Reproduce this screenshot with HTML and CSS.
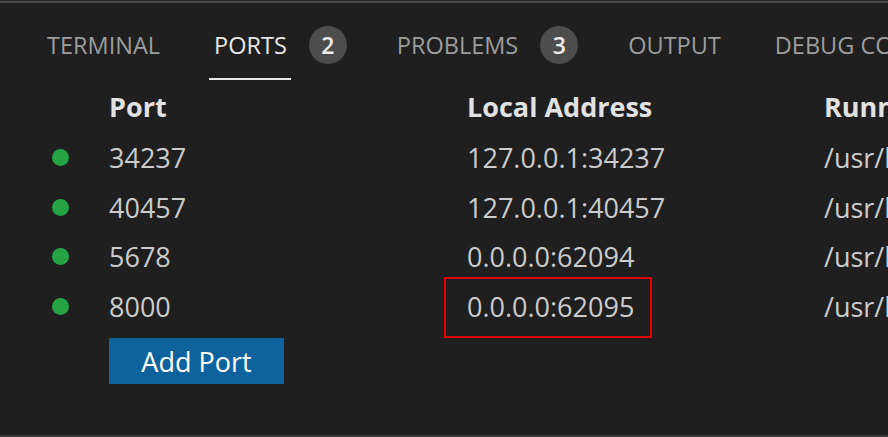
FILE: index.html
```html
<html>
  <head>
    <title>Ports</title>
    <link rel="stylesheet" href="styles.css">
  </head>
  <body>
    <section class="panel">
      <nav class="panel-tabs">
        <div class="tab"><span class="tab-label">TERMINAL</span></div>
        <div class="tab active"><span class="tab-label">PORTS</span><span class="badge">2</span></div>
        <div class="tab"><span class="tab-label">PROBLEMS</span><span class="badge">3</span></div>
        <div class="tab"><span class="tab-label">OUTPUT</span></div>
        <div class="tab"><span class="tab-label">DEBUG CONSOLE</span></div>
      </nav>

      <div class="ports-table">
        <div class="row header">
          <span class="cell-icon"></span>
          <span class="cell">Port</span>
          <span class="cell">Local Address</span>
          <span class="cell">Running Process</span>
        </div>
        <div class="row">
          <span class="cell-icon"><i class="dot"></i></span>
          <span class="cell">34237</span>
          <span class="cell">127.0.0.1:34237</span>
          <span class="cell">/usr/bin/python3</span>
        </div>
        <div class="row">
          <span class="cell-icon"><i class="dot"></i></span>
          <span class="cell">40457</span>
          <span class="cell">127.0.0.1:40457</span>
          <span class="cell">/usr/bin/python3</span>
        </div>
        <div class="row">
          <span class="cell-icon"><i class="dot"></i></span>
          <span class="cell">5678</span>
          <span class="cell">0.0.0.0:62094</span>
          <span class="cell">/usr/bin/python3</span>
        </div>
        <div class="row">
          <span class="cell-icon"><i class="dot"></i></span>
          <span class="cell">8000</span>
          <span class="cell marked">0.0.0.0:62095<b class="highlight"></b></span>
          <span class="cell">/usr/bin/python3</span>
        </div>
        <div class="row actions">
          <span class="cell-icon"></span>
          <span class="cell"><button class="add-port">Add Port</button></span>
        </div>
      </div>
    </section>
  </body>
</html>
```

FILE: styles.css
```css
html {
  background-color: #1f1f1f;
}

body {
  margin: 0;
  padding-top: 1px;
  background-color: #262626;
  height: 100vh;
  box-sizing: border-box;
  overflow: hidden;
  font-family: "Open Sans", "Noto Sans", sans-serif;
}

.panel {
  background-color: #1f1f1f;
  border-top: 2px solid #474747;
  border-bottom: 2px solid #3a3a3a;
  height: 100%;
  box-sizing: border-box;
  display: flex;
  flex-direction: column;
}

.panel-tabs {
  display: flex;
  flex-direction: row;
  height: 77px;
  padding-left: 42px;
  white-space: nowrap;

  .tab {
    display: flex;
    align-items: center;
    gap: 18px;
    margin-right: 45px;
    color: #9d9d9d;
    font-size: 23.5px;
  }

  .tab-label {
    padding: 9px 4px 0 5px;
    height: 100%;
    display: flex;
    align-items: center;
    box-sizing: border-box;
    border-bottom: 2px solid transparent;
  }

  .active {
    color: #e7e7e7;

    .tab-label {
      border-bottom-color: #e7e7e7;
    }
  }

  .badge {
    width: 38px;
    height: 38px;
    border-radius: 50%;
    background-color: #4d4d4d;
    color: #ececec;
    font-size: 23px;
    font-weight: 600;
    display: flex;
    align-items: center;
    justify-content: center;
    margin-top: 6px;
  }
}

.ports-table {
  display: flex;
  flex-direction: column;
  color: #cccccc;
  font-size: 27px;

  .row {
    display: grid;
    grid-template-columns: 109px 358px 357px 1fr;
    align-items: center;
    height: 49.5px;
    white-space: nowrap;
  }

  .header {
    height: 53px;
    font-weight: 700;
    color: #e2e2e2;
  }

  .cell-icon {
    display: flex;
    justify-content: flex-start;
    padding-left: 52px;
  }

  .dot {
    width: 17px;
    height: 17px;
    border-radius: 50%;
    background-color: #26a345;
    margin-top: 0;
  }

  .marked {
    position: relative;
  }

  .highlight {
    position: absolute;
    left: -23px;
    top: -11px;
    width: 208px;
    height: 61px;
    box-sizing: border-box;
    border: 2px solid #e00000;
  }

  .actions {
    height: 54px;
    align-items: start;
  }
}

.add-port {
  background-color: #0e639c;
  border: none;
  color: #ffffff;
  font-family: "Open Sans", "Noto Sans", sans-serif;
  font-size: 27px;
  width: 175px;
  height: 46px;
  padding: 0;
  margin-top: 7px;
  cursor: pointer;
}
```
